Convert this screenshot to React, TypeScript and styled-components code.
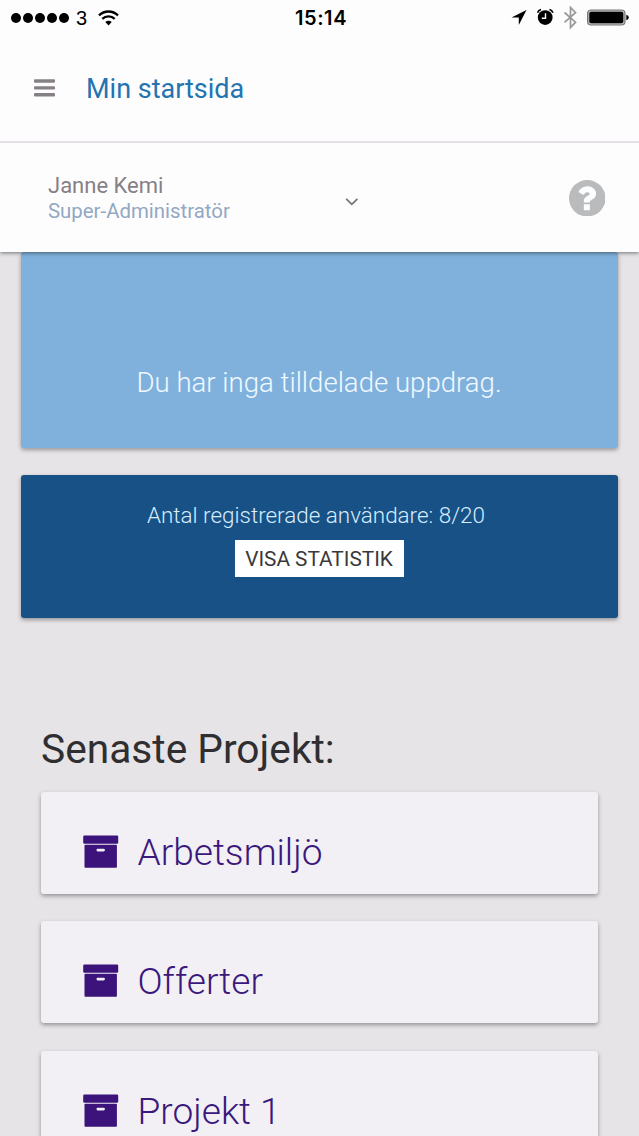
import React from "react";
import styled, { createGlobalStyle } from "styled-components";

const Global = createGlobalStyle`
  *, *::before, *::after { box-sizing: border-box; }
  html, body { margin: 0; padding: 0; background: #e6e4e7; overflow: hidden; }
  body { font-family: Roboto, "Liberation Sans", sans-serif; }
`;

const Screen = styled.div`
  width: 639px;
  height: 1136px;
  overflow: hidden;
  display: flex;
  flex-direction: column;
  background: #e6e4e7;
`;

const Header = styled.header`
  flex: none;
  background: #fefdfe;
  box-shadow: 0 1px 4px rgba(0, 0, 0, 0.5);
  z-index: 1;
`;

const StatusBar = styled.div`
  height: 36px;
  display: grid;
  grid-template-columns: 1fr auto 1fr;
  align-items: center;
  padding: 0 10px 0 11px;
  color: #000;
`;

const StatusGroup = styled.div<{ $end?: boolean }>`
  display: flex;
  align-items: center;
  justify-content: ${(p) => (p.$end ? "flex-end" : "flex-start")};
`;

const Signal = styled.div`
  display: flex;
  gap: 2px;
  margin-right: 7px;
`;

const Dot = styled.i`
  width: 10px;
  height: 10px;
  border-radius: 50%;
  background: #000;
`;

const Carrier = styled.span`
  font: 400 20px/22px "Liberation Sans", sans-serif;
  width: 12px;
  margin-right: 10px;
`;

const Clock = styled.time`
  font: 600 20px/22px Inter, sans-serif;
  letter-spacing: 0.6px;
  padding-left: 2px;
`;

const TitleBar = styled.div`
  height: 107px;
  display: flex;
  align-items: center;
  padding: 0 34px 1px;
  border-bottom: 2px solid #e5e0e5;
`;

const MenuButton = styled.button`
  display: flex;
  padding: 0;
  border: 0;
  background: none;
  margin-right: 31px;
`;

const Title = styled.h1`
  margin: 0;
  padding-top: 2px;
  font-size: 27px;
  line-height: 32px;
  font-weight: 400;
  color: #2374b0;
`;

const UserBar = styled.div`
  height: 109px;
  display: flex;
  align-items: center;
  padding: 0 34px 0 48px;
`;

const UserInfo = styled.div`
  width: 297px;
  line-height: 26px;
`;

const UserName = styled.div`
  padding-top: 1px;
  line-height: 26px;
  margin-bottom: -1px;
  font-size: 22px;
  color: #868085;
`;

const UserRole = styled.div`
  font-size: 20.4px;
  color: #92a8c3;
`;

const Toggle = styled.span`
  display: flex;
  padding-top: 8px;
`;

const HelpButton = styled(MenuButton)`
  margin: 1px 0 0 auto;
`;

const Main = styled.main`
  flex: 1;
  min-height: 0;
  overflow: hidden;
  padding: 0 21px;
`;

const Panel = styled.section<{ $tone: "light" | "dark" }>`
  display: flex;
  flex-direction: column;
  align-items: center;
  color: #fff;
  font-weight: 300;
  border-radius: 3px;
  box-shadow: 0 2px 4px rgba(0, 0, 0, 0.35);
  background: ${(p) => (p.$tone === "light" ? "#80b1dc" : "#175186")};
  height: ${(p) => (p.$tone === "light" ? "196px" : "143px")};
  padding-top: ${(p) => (p.$tone === "light" ? "115px" : "27px")};
  margin-bottom: ${(p) => (p.$tone === "light" ? "27px" : "0")};
`;

const EmptyText = styled.p`
  margin: 0;
  padding-right: 1px;
  font-size: 27.6px;
  line-height: 32px;
  color: #f0f9ff;
`;

const CountText = styled.p`
  margin: 0;
  padding-right: 7px;
  font-size: 22.45px;
  line-height: 27px;
  color: #d6ecff;
`;

const StatButton = styled.button`
  margin-top: 11px;
  width: 169px;
  height: 37px;
  padding: 1px 1px 0 0;
  border: 0;
  background: #fff;
  color: #3b383b;
  font: 400 20.8px/36px Roboto, sans-serif;
  white-space: nowrap;
`;

const Projects = styled.section`
  padding: 106px 20px 0;
`;

const Heading = styled.h2`
  margin: 0 0 18px;
  font-size: 40.7px;
  line-height: 50px;
  font-weight: 400;
  color: #2f2e31;
`;

const ProjectCard = styled.a`
  display: flex;
  align-items: center;
  height: 102px;
  margin-bottom: 27.3px;
  padding: 17px 0 0 42px;
  border-radius: 3px;
  background: #f2f0f4;
  box-shadow: 0 2px 4px rgba(0, 0, 0, 0.36);
  color: #3b187c;
`;

const ProjectName = styled.span`
  margin-left: 18.5px;
  padding-top: 3px;
  font-size: 37.1px;
  line-height: 44px;
  font-weight: 300;
`;

const WifiIcon = () => (
  <svg width="21" height="16" viewBox="0 0 21 16" fill="none" stroke="#000" strokeWidth="2.3">
    <path d="M1 5.4a13.5 13.5 0 0 1 19 0" />
    <path d="M4.3 8.9a8.8 8.8 0 0 1 12.4 0" />
    <path d="M10.5 15.4 7.3 12a4.6 4.6 0 0 1 6.4 0z" fill="#000" stroke="none" />
  </svg>
);

const StatusIcons = () => (
  <svg width="118" height="24" viewBox="0 0 118 24">
    <path d="M15.500 4 .5 11.600h7.300V19z" fill="#000" />
    <circle cx="34.200" cy="11.600" r="7.400" fill="#000" />
    <path d="M34.500 7.200v5h-3.700" fill="none" stroke="#fff" strokeWidth="1.400" />
    <path d="M26.500 6.700q1-2.400 3.500-3.200M38.500 3.500Q41 4.300 42 6.700" fill="none" stroke="#000" strokeWidth="1.600" />
    <path d="M53.500 6.500 64.500 16.200 59.500 21.500V1.500l5 5.200-11 9.600" fill="none" stroke="#999" strokeWidth="1.700" />
    <rect x="76.600" y="4" width="37.400" height="15" rx="3.500" fill="#bbb" stroke="#777" strokeWidth="1.200" />
    <rect x="78.300" y="5.700" width="34" height="11.600" rx="1.800" fill="#000" />
    <path d="M115.300 8.800q2.500.6 2.500 2.700t-2.500 2.700z" fill="#000" />
  </svg>
);

const BurgerIcon = () => (
  <svg width="21" height="18" viewBox="0 0 21 18" fill="#858085">
    <rect width="21" height="3.400" rx="1" y="0.300" />
    <rect width="21" height="3.400" rx="1" y="7.200" />
    <rect width="21" height="3.400" rx="1" y="14.100" />
  </svg>
);

const ChevronIcon = () => (
  <svg width="14" height="10" viewBox="0 0 14 10" fill="none" stroke="#777478" strokeWidth="1.700">
    <path d="m1.200 1.800 5.600 5.600 5.600-5.600" />
  </svg>
);

const HelpIcon = () => (
  <svg width="36.500" height="36.500" viewBox="0 0 36.500 36.500">
    <circle cx="18.250" cy="18.250" r="18.250" fill="#b9bbbd" />
    <path
      d="M9.400 11.900C11.200 8.600 14.300 6.300 18.400 6.300c4.800 0 8.700 3.200 8.700 7.400 0 3.100-1.700 4.700-4.300 6.100-1.500.8-2 1.500-2 2.700h-6v-1.300c0-2.600 1.500-4.300 3.900-5.400 1.400-.6 1.900-1.100 1.900-1.900 0-1-1-1.700-2.300-1.700-1.700 0-2.600 1.100-3.900 2.800z"
      fill="#fefdfe"
    />
    <rect x="14.800" y="24.200" width="6.100" height="6.100" rx="0.400" fill="#fefdfe" />
  </svg>
);

const ArchiveIcon = () => (
  <svg width="36" height="33" viewBox="0 0 36 33" fill="#3b137b">
    <rect x="0.200" y="0.500" width="35" height="8.200" rx="1.200" />
    <path fillRule="evenodd" d="M2.300 9.700h30.800q.8 0 .8.800V32q0 .8-.8.800h-30.800q-.8 0-.8-.8V10.500q0-.8.800-.8zM14.800 13.700a1.350 1.350 0 0 0 0 2.700h5.800a1.350 1.350 0 0 0 0-2.700z" />
  </svg>
);

const projects = ["Arbetsmiljö", "Offerter", "Projekt 1"];

export default function App() {
  return (
    <Screen>
      <Global />
      <Header>
        <StatusBar>
          <StatusGroup>
            <Signal>
              {[0, 1, 2, 3, 4].map((n) => (
                <Dot key={n} />
              ))}
            </Signal>
            <Carrier>3</Carrier>
            <WifiIcon />
          </StatusGroup>
          <Clock>15:14</Clock>
          <StatusGroup $end>
            <StatusIcons />
          </StatusGroup>
        </StatusBar>
        <TitleBar>
          <MenuButton aria-label="Meny">
            <BurgerIcon />
          </MenuButton>
          <Title>Min startsida</Title>
        </TitleBar>
        <UserBar>
          <UserInfo>
            <UserName>Janne Kemi</UserName>
            <UserRole>Super-Administratör</UserRole>
          </UserInfo>
          <Toggle>
            <ChevronIcon />
          </Toggle>
          <HelpButton aria-label="Hjälp">
            <HelpIcon />
          </HelpButton>
        </UserBar>
      </Header>
      <Main>
        <Panel $tone="light">
          <EmptyText>Du har inga tilldelade uppdrag.</EmptyText>
        </Panel>
        <Panel $tone="dark">
          <CountText>Antal registrerade användare: 8/20</CountText>
          <StatButton>VISA STATISTIK</StatButton>
        </Panel>
        <Projects>
          <Heading>Senaste Projekt:</Heading>
          {projects.map((name) => (
            <ProjectCard key={name}>
              <ArchiveIcon />
              <ProjectName>{name}</ProjectName>
            </ProjectCard>
          ))}
        </Projects>
      </Main>
    </Screen>
  );
}
